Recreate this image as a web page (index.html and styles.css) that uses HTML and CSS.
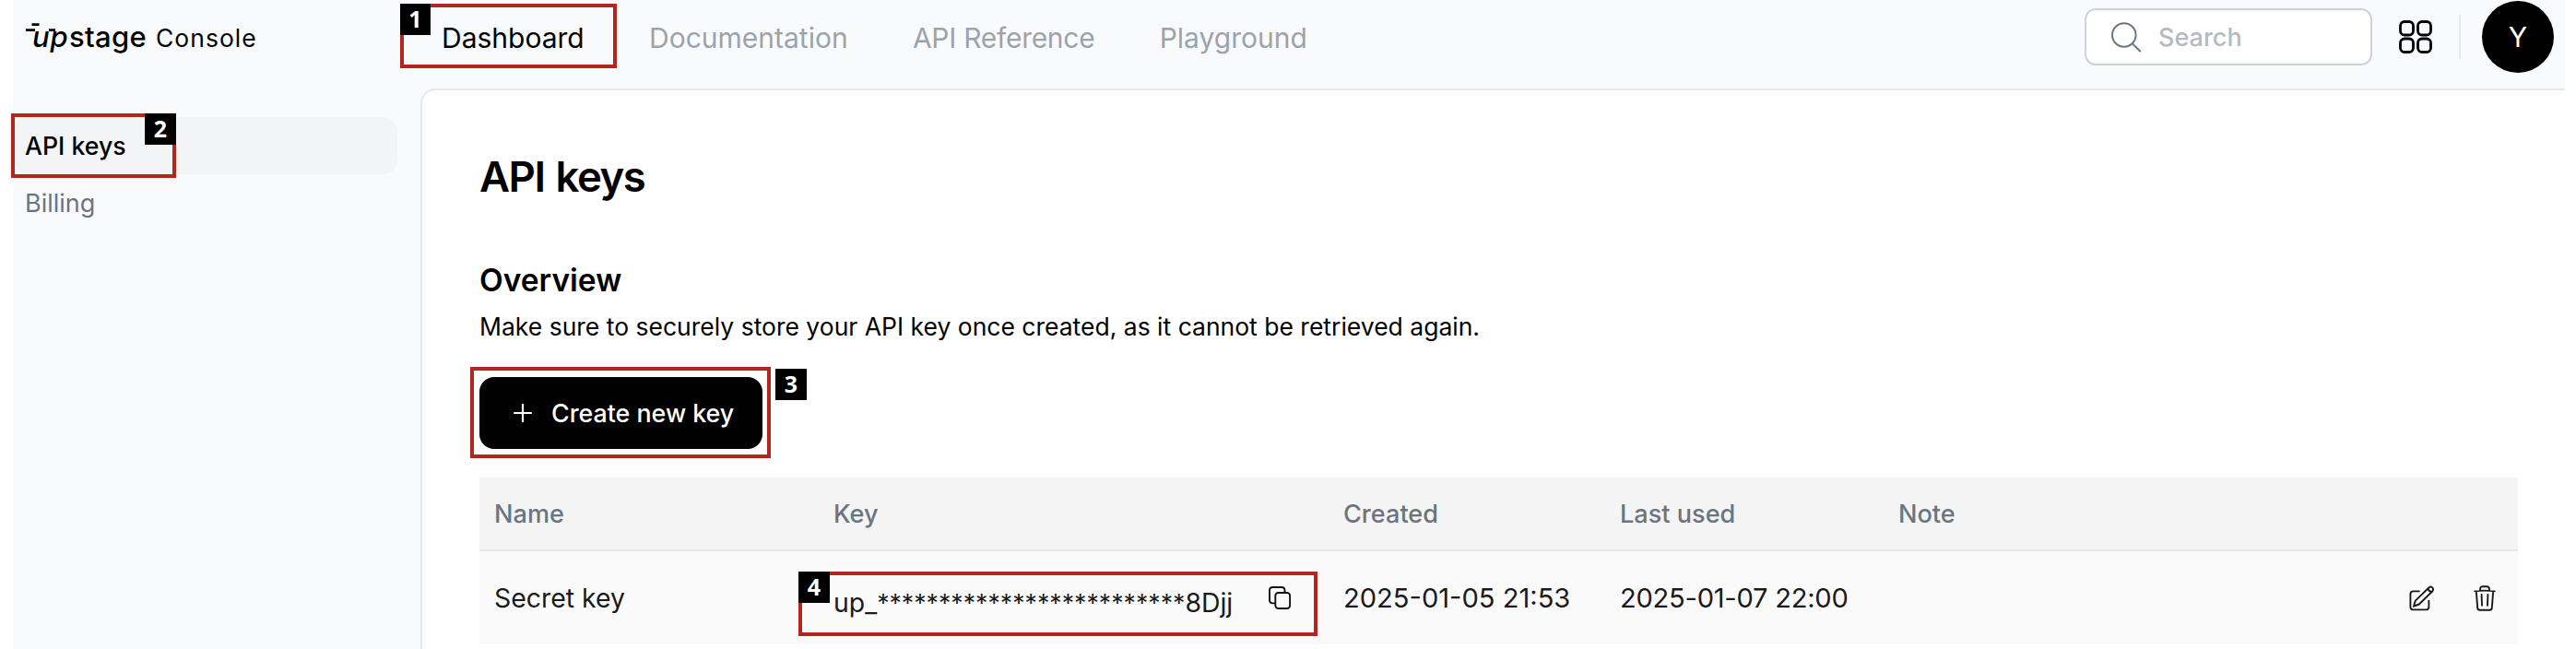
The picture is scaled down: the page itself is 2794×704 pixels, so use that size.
FILE: index.html
```html
<!DOCTYPE html>
<html lang="en">
<head>
<meta charset="utf-8">
<title>Upstage Console</title>
<link rel="stylesheet" href="styles.css">
</head>
<body>
<div class="shell">
  <header class="header">
    <div class="brand">
      <div class="logo">
        <span class="logo-up">up</span><span class="logo-stage">stage</span>
        <svg class="logo-marks" width="50" height="34" viewBox="0 0 50 34" fill="none" stroke="#000" stroke-width="2.8">
          <path d="M6.5 4.6H14.5M0 10.6H10M25 10.6H32"/>
        </svg>
      </div>
      <span class="product">Console</span>
    </div>
    <nav class="nav">
      <a class="nav-item active">Dashboard</a>
      <a class="nav-item">Documentation</a>
      <a class="nav-item nav-reference">API Reference</a>
      <a class="nav-item">Playground</a>
    </nav>
    <div class="tools">
      <div class="search">
        <svg width="34" height="34" viewBox="0 0 34 34" fill="none" stroke="#6b7580" stroke-width="2" stroke-linecap="round"><circle cx="14.8" cy="15" r="12.8"/><path d="M24 24.5L32.2 32.5"/></svg>
        <span>Search</span>
      </div>
      <svg class="grid-icon" width="36" height="36" viewBox="0 0 36 36" fill="none" stroke="#000" stroke-width="2.8"><rect x="1.5" y="1.5" width="14" height="14.5" rx="4.5"/><rect x="20.5" y="1.5" width="14" height="14.5" rx="4.5"/><rect x="1.5" y="20" width="14" height="14.5" rx="4.5"/><rect x="20.5" y="20" width="14" height="14.5" rx="4.5"/></svg>
      <span class="divider"></span>
      <div class="avatar">Y</div>
    </div>
  </header>
  <div class="body">
    <aside class="sidebar">
      <a class="side-item selected">API keys</a>
      <a class="side-item">Billing</a>
    </aside>
    <main class="panel">
      <h1>API keys</h1>
      <h2>Overview</h2>
      <p class="desc">Make sure to securely store your API key once created, as it cannot be retrieved again.</p>
      <button class="create">
        <svg width="20" height="20" viewBox="0 0 20 20" stroke="#fff" stroke-width="2.2" stroke-linecap="round"><path d="M10 1V19M1 10H19"/></svg>
        <span>Create new key</span>
      </button>
      <div class="table">
        <div class="row head"><span>Name</span><span>Key</span><span>Created</span><span>Last used</span><span>Note</span><span></span></div>
        <div class="row data">
          <span class="name">Secret key</span>
          <span class="key"><span>up_<span class="mask">*************************</span>8Djj</span>
            <svg width="24" height="25" viewBox="0 0 24 25" fill="none" stroke="#111" stroke-width="1.9"><rect x="7.3" y="7" width="15.8" height="17" rx="3.2"/><path d="M7.3 18.4H4.5Q1 18.4 1 15V4.4Q1 1 4.5 1H14Q17.5 1 17.5 4.4V7"/></svg>
          </span>
          <span class="date">2025-01-05 21:53</span>
          <span class="date last-used">2025-01-07 22:00</span>
          <span></span>
          <span class="actions">
            <svg width="28" height="28" viewBox="0 0 28 28" fill="none" stroke="#1a1a1a" stroke-width="1.9" stroke-linecap="round" stroke-linejoin="round"><path d="M10.8 6.4H4.6Q1.4 6.4 1.4 9.6V23.2Q1.4 26.4 4.6 26.4H18.2Q21.4 26.4 21.4 23.2V16.6"/><path d="M5 22.7L6.8 16.6L21.6 2.3Q23.4 .8 25.2 2.4Q26.9 4.2 25.4 6.2L10.8 20.5Z"/><path d="M20.7 3.6Q21.2 6.6 24.4 7"/></svg>
            <svg width="24" height="28" viewBox="0 0 24 28" fill="none" stroke="#1a1a1a" stroke-width="1.9" stroke-linecap="round" stroke-linejoin="round"><path d="M1.2 6.4Q12 4.9 22.8 6.4M2.8 6.4L4.2 24.4Q4.4 26.7 6.7 26.7H17.3Q19.6 26.7 19.8 24.4L21.2 6.4M7 5.5V4.2Q7 1.2 10 1.2H14Q17 1.2 17 4.2V5.5M8.6 10L9 21.8M15.4 10L15 21.8"/></svg>
          </span>
        </div>
      </div>
    </main>
  </div>
</div>
<div class="mark mark-1"></div><span class="num num-1">1</span>
<div class="mark mark-2"></div><span class="num num-2">2</span>
<div class="mark mark-3"></div><span class="num num-3">3</span>
<div class="mark mark-4"></div><span class="num num-4">4</span>
</body>
</html>
```
FILE: styles.css
```css
* { box-sizing: border-box; }
body { margin: 0; background: #fff; font-family: Inter, sans-serif; color: #000; position: relative; }
.shell { margin-left: 14px; width: 2768px; height: 704px; background: #f9fafc; display: flex; flex-direction: column; overflow: hidden; }
.header { height: 96px; padding: 0 12px 16px 14px; display: flex; align-items: center; flex: none; }

.brand { width: 451px; display: flex; align-items: baseline; line-height: 36px; padding-top: 1px; }
.logo { position: relative; font-size: 31px; font-weight: 600; width: 141px; display: flex; padding-left: 7px; }
.logo-up { font-style: italic; font-weight: 500; width: 40px; letter-spacing: 0.8px; }
.logo-stage { font-weight: 500; letter-spacing: 0.3px; }
.logo-marks { position: absolute; left: 0; top: 0; }
.product { font-size: 26.5px; letter-spacing: 1px; }

.nav { display: flex; gap: 70.3px; font-size: 30px; line-height: 36px; padding-top: 1px; }
.nav-item { color: #9ca3ad; white-space: nowrap; }
.nav-item.active { color: #000; }
.nav-reference { letter-spacing: -0.28px; }

.tools { margin-left: auto; display: flex; align-items: center; }
.search { width: 312px; height: 62px; border: 2px solid #cfd2d8; border-radius: 12px; background: #fff; display: flex; align-items: center; gap: 18px; padding-left: 26px; font-size: 27px; font-weight: 500; color: #b5bac1; }
.grid-icon { margin-left: 29px; }
.divider { width: 2px; height: 48px; background: #e5e7eb; margin: 0 23px 0 29px; }
.avatar { width: 78px; height: 78px; border-radius: 50%; background: #000; color: #fff; font-size: 30px; display: flex; align-items: center; justify-content: center; }

.body { flex: 1; display: flex; min-height: 0; }
.sidebar { width: 442px; padding-top: 31px; flex: none; }
.side-item { display: flex; align-items: center; width: 417px; height: 62px; padding-left: 13px; border-radius: 16px; font-size: 27px; color: #6b7580; }
.side-item.selected { background: #f3f4f6; color: #000; font-weight: 500; font-size: 26.7px; }

.panel { flex: 1; min-width: 0; background: #fff; border-left: 2px solid #e5e7eb; border-top: 2px solid #e5e7eb; border-top-left-radius: 16px; padding: 64px 51px 0 62px; }
h1 { margin: 0; font-size: 45.5px; line-height: 60px; font-weight: 600; letter-spacing: -1.5px; word-spacing: 2px; }
h2 { margin: 62px 0 0; font-size: 33.5px; line-height: 40px; font-weight: 600; }
.desc { margin: 12px 0 0; font-size: 26.5px; line-height: 36px; }
.create { margin: 37px 0 0; width: 307px; height: 78px; border: 0; border-radius: 16px; background: #000; color: #fff; display: flex; align-items: center; gap: 21px; padding: 0 0 0 37px; font: 500 26.8px Inter, sans-serif; }

.table { margin-top: 31px; }
.row { display: grid; grid-template-columns: 368px 553px 300px 302px 1fr 130px; align-items: center; }
.row > span { padding-left: 16px; white-space: nowrap; }
.head { height: 80px; background: #f4f4f5; border-bottom: 2px solid #e5e5ea; color: #6b7580; font-size: 27.1px; font-weight: 500; }
.data { height: 101px; background: #fafafa; color: #1a1a1a; font-size: 28.4px; }
.date { font-size: 29.1px; }
.last-used { letter-spacing: -0.25px; }
.row .key { display: flex; gap: 39px; padding-top: 10px; }
.mask { font-size: 26.7px; }
.row .actions { display: flex; gap: 42px; padding-left: 12px; }

/* Step callouts over the page */
.mark { position: absolute; border: 4px solid #b3261c; }
.mark-1 { left: 434px; top: 4px; width: 235px; height: 70px; }
.mark-2 { left: 12px; top: 123px; width: 179px; height: 70px; }
.mark-3 { left: 510px; top: 398px; width: 326px; height: 99px; }
.mark-4 { left: 866px; top: 620px; width: 563px; height: 70px; }
.num { position: absolute; width: 34px; height: 34px; background: #000; color: #fff; font: 700 25px/32px "Noto Sans", sans-serif; text-align: center; }
.num-1 { left: 434px; top: 4px; width: 33px; }
.num-2 { left: 157px; top: 123px; }
.num-3 { left: 841px; top: 400px; }
.num-4 { left: 866px; top: 620px; }
```
